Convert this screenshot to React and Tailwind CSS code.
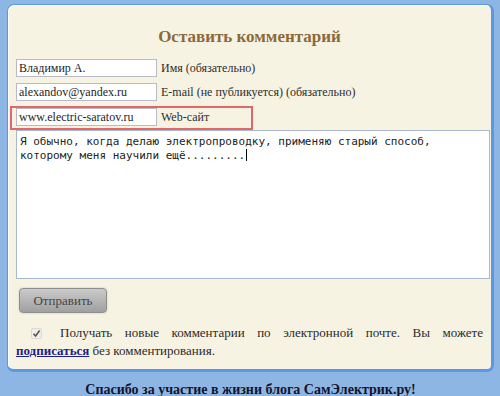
const serif = { fontFamily: '"Liberation Serif", "Times New Roman", serif' };

function Field({ value, label }) {
  return (
    <div className="flex items-center gap-[4px]" style={serif}>
      <div className="flex h-[18px] w-[141px] items-center border border-[#b9b9c9] bg-white pl-[2px] text-[12px] text-[#1e1e1e]">
        {value}
      </div>
      <span className="text-[12px] leading-none text-[#2e2e2e]">{label}</span>
    </div>
  );
}

function CheckMark() {
  return (
    <span className="inline-flex h-[11px] w-[11px] items-center justify-center rounded-[2px] border border-[#dcdad2] bg-[#f0eee8] align-[-1px]">
      <svg width="9" height="9" viewBox="0 0 9 9">
        <path d="M1.5 4.8 L3.6 7 L7.6 1.6" fill="none" stroke="#555" strokeWidth="1.6" />
      </svg>
    </span>
  );
}

export default function App() {
  return (
    <div className="h-[396px] w-[500px] overflow-hidden bg-[#8db6e4] pl-[7px] pt-[4px]" style={serif}>
      <div className="h-[368px] w-[487px] rounded-[7px] border border-b-[3px] border-r-[3px] border-[#5a98e6] bg-[#f7f3e3] shadow-[inset_1px_1px_0_#ffffff]">
        <h2 className="pt-[22px] text-center text-[17px] font-bold leading-[20px] text-[#8b6a3a]">
          Оставить комментарий
        </h2>

        <div className="mt-[12px] flex flex-col pl-[8px]">
          <Field value="Владимир А." label="Имя (обязательно)" />
          <div className="mt-[6px]">
            <Field value="alexandov@yandex.ru" label="E-mail (не публикуется) (обязательно)" />
          </div>
          <div className="relative mt-[7px]">
            <Field value="www.electric-saratov.ru" label="Web-сайт" />
            <div className="absolute left-[-6px] top-[-2px] h-[24px] w-[243px] border-2 border-[#e0686a]" />
          </div>

          <div
            className="mt-[4px] h-[149px] w-[474px] border border-[#a9b8cc] bg-white px-[3px] pt-[4px] text-[11px] leading-[14px] text-[#222]"
            style={{ fontFamily: '"DejaVu Sans Mono", "Liberation Mono", monospace' }}
          >
            Я обычно, когда делаю электропроводку, применяю старый способ,
            <br />
            которому меня научили ещё.........
            <span className="ml-[1px] inline-block h-[12px] w-[1px] bg-black align-[-2px]" />
          </div>

          <button
            className="ml-[3px] mt-[9px] h-[25px] w-[88px] rounded-[4px] border border-[#8e8e8e] bg-gradient-to-b from-[#cbcbcb] to-[#a0a0a0] text-[13px] text-[#444] shadow-[0_0_2px_#bbb]"
            style={serif}
          >
            Отправить
          </button>

          <p className="mt-[11px] w-[467px] text-justify text-[13px] leading-[18px] text-[#2a2a2a]" style={serif}>
            <span className="ml-[15px] mr-[18px]">
              <CheckMark />
            </span>
            Получать новые комментарии по электронной почте. Вы можете{" "}
            <a className="font-bold text-[#1c1c8c] underline">подписаться</a> без комментирования.
          </p>
        </div>
      </div>

      <div className="w-[487px] pt-[9px] text-center text-[14px] font-bold leading-[18px] text-[#15152a]">
        Спасибо за участие в жизни блога СамЭлектрик.ру!
      </div>
    </div>
  );
}
